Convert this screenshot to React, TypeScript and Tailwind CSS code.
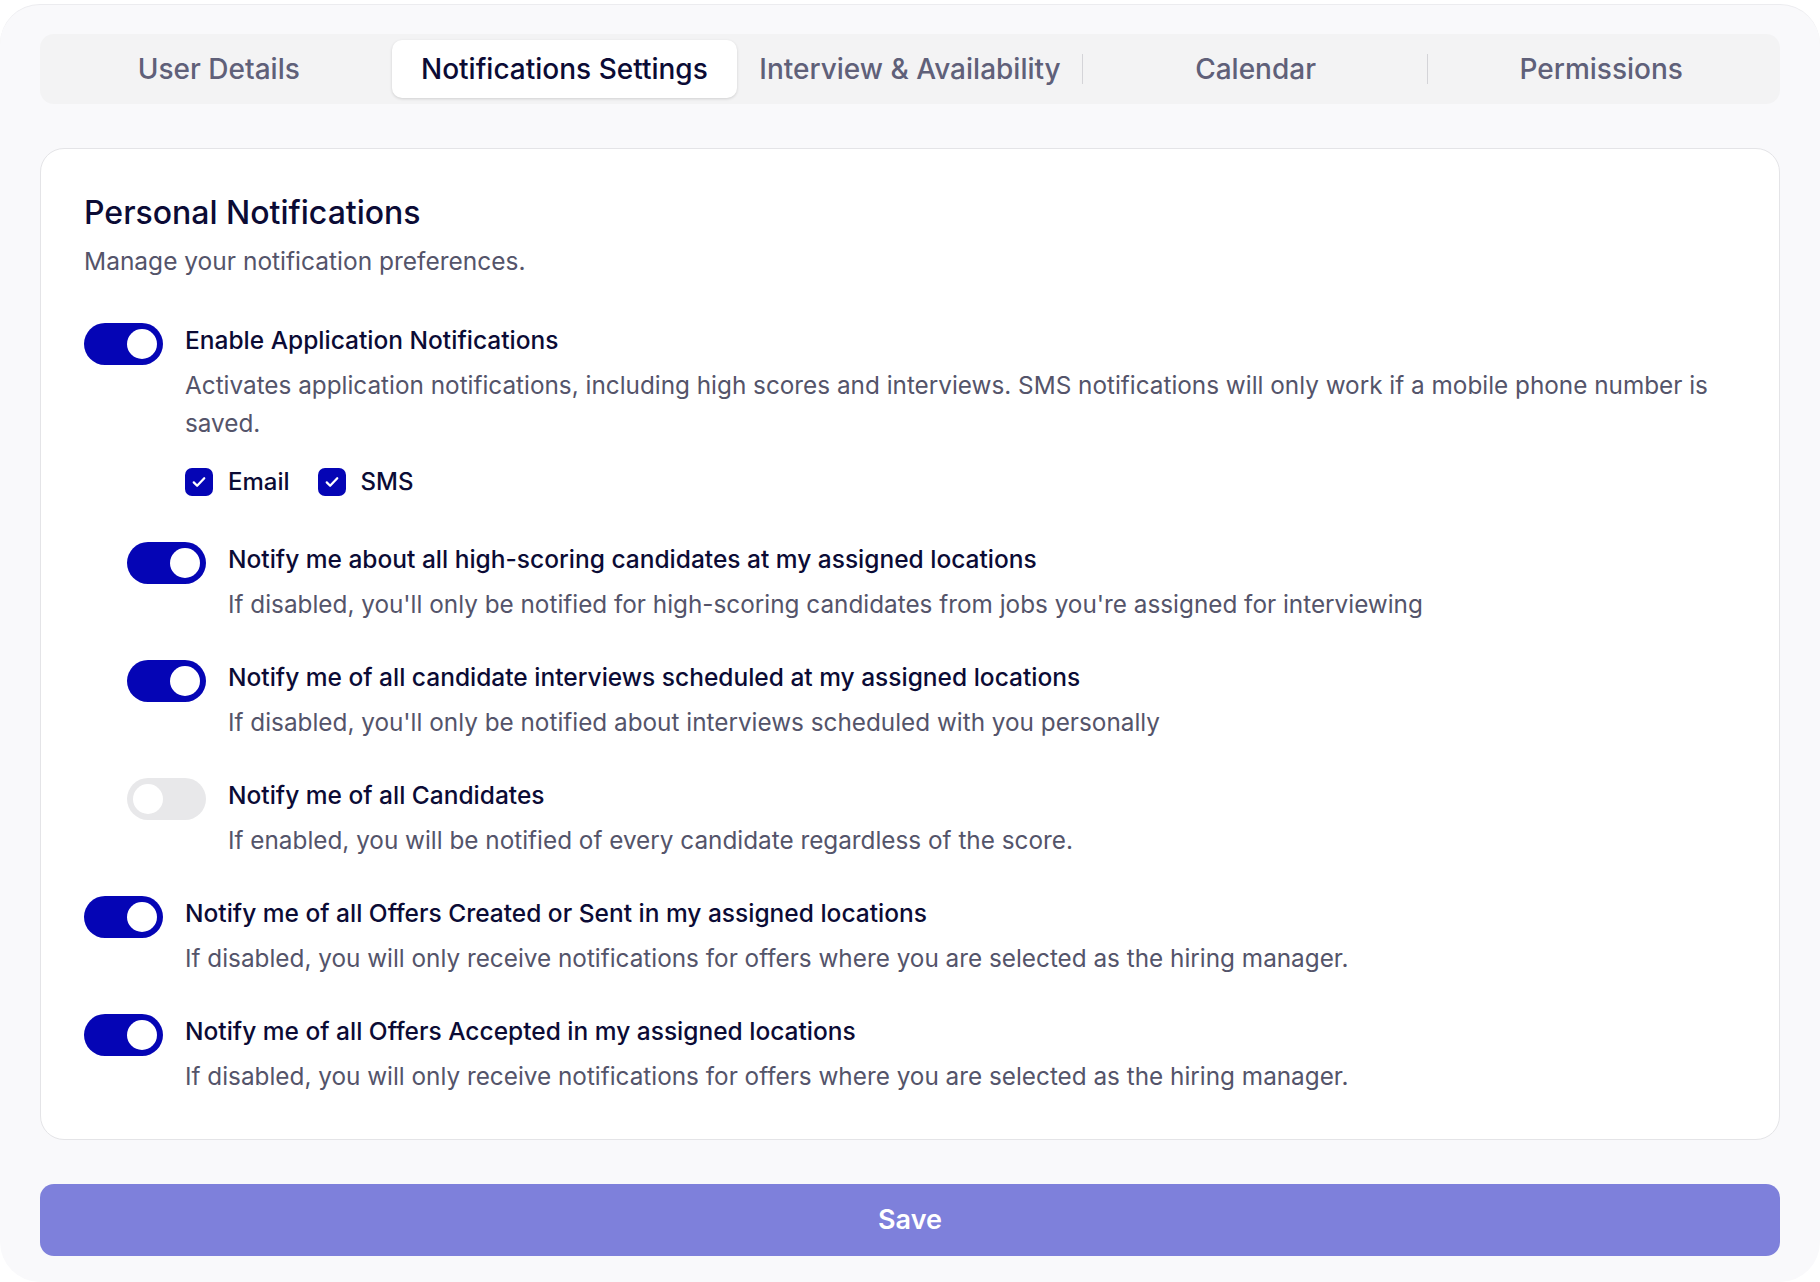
import React from "react";

const font = { fontFamily: "Inter, 'Noto Sans', sans-serif" };

function Toggle({ on }: { on: boolean }) {
  return (
    <div
      className={`relative shrink-0 w-[79px] h-[42px] rounded-full ${on ? "bg-[#0505b5]" : "bg-[#e8e8ea]"}`}
    >
      <div
        className={`absolute top-[6px] w-[30px] h-[30px] rounded-full bg-white ${on ? "right-[6px]" : "left-[6px]"}`}
      />
    </div>
  );
}

function Check({ label }: { label: string }) {
  return (
    <div className="flex items-center gap-[15px]">
      <div className="w-[28px] h-[28px] rounded-[7px] bg-[#0505b5] flex items-center justify-center">
        <svg width="18" height="18" viewBox="0 0 24 24" fill="none" stroke="white" strokeWidth="3" strokeLinecap="round" strokeLinejoin="round">
          <path d="M5 12.5l4.5 4.5L19 7" />
        </svg>
      </div>
      <span className="text-[24px] font-medium text-[#0b0b35]">{label}</span>
    </div>
  );
}

function Row({ on, label, desc, indent, children }: { on: boolean; label: string; desc: string; indent?: boolean; children?: React.ReactNode }) {
  return (
    <div className={`flex gap-[22px] ${indent ? "pl-[43px]" : ""}`}>
      <Toggle on={on} />
      <div className="flex flex-col">
        <div className="text-[24.5px] leading-[34px] font-medium text-[#0b0b35]">{label}</div>
        <div className="mt-[9px] text-[24.3px] leading-[38px] text-[#54546a]">{desc}</div>
        {children}
      </div>
    </div>
  );
}

export default function App() {
  const tabs = ["User Details", "Notifications Settings", "Interview & Availability", "Calendar", "Permissions"];
  return (
    <div className="bg-white min-h-screen" style={font}>
      <div className="mt-[4px] min-h-[1278px] rounded-[40px] bg-[#f9f9fb] border-t border-[#ececef] px-[40px] pt-[29px] pb-[21px]">
        <div className="grid grid-cols-5 h-[70px] rounded-[14px] bg-[#f3f3f4] p-[6px]">
          {tabs.map((t, i) => (
            <div key={t} className="relative flex items-center justify-center">
              {i === 1 ? (
                <div className="w-full h-full rounded-[10px] bg-white shadow-[0_1px_3px_rgba(0,0,0,0.15)] flex items-center justify-center text-[28px] font-medium text-[#0b0b35]">
                  {t}
                </div>
              ) : (
                <span className="text-[28px] font-medium text-[#5f6079]">{t}</span>
              )}
              {(i === 2 || i === 3) && (
                <div className="absolute right-0 top-1/2 -translate-y-1/2 w-px h-[30px] bg-[#d4d4d8]" />
              )}
            </div>
          ))}
        </div>

        <div className="mt-[44px] rounded-[24px] bg-white border border-[#e4e4e7] pl-[43px] pr-[43px] pt-[44px] pb-[44px]">
          <h1 className="text-[32px] leading-[40px] font-medium text-[#0b0b35]">Personal Notifications</h1>
          <p className="mt-[12px] text-[24.5px] leading-[32px] text-[#54546a]">Manage your notification preferences.</p>

          <div className="mt-[46px] flex flex-col">
            <Row
              on
              label="Enable Application Notifications"
              desc="Activates application notifications, including high scores and interviews. SMS notifications will only work if a mobile phone number is saved."
            >
              <div className="mt-[22px] flex gap-[28px]">
                <Check label="Email" />
                <Check label="SMS" />
              </div>
            </Row>
            <div className="mt-[42px] flex flex-col gap-[37px]">
              <Row
                indent
                on
                label="Notify me about all high-scoring candidates at my assigned locations"
                desc="If disabled, you'll only be notified for high-scoring candidates from jobs you're assigned for interviewing"
              />
              <Row
                indent
                on
                label="Notify me of all candidate interviews scheduled at my assigned locations"
                desc="If disabled, you'll only be notified about interviews scheduled with you personally"
              />
              <Row
                indent
                on={false}
                label="Notify me of all Candidates"
                desc="If enabled, you will be notified of every candidate regardless of the score."
              />
              <Row
                on
                label="Notify me of all Offers Created or Sent in my assigned locations"
                desc="If disabled, you will only receive notifications for offers where you are selected as the hiring manager."
              />
              <Row
                on
                label="Notify me of all Offers Accepted in my assigned locations"
                desc="If disabled, you will only receive notifications for offers where you are selected as the hiring manager."
              />
            </div>
          </div>
        </div>

        <button className="mt-[44px] w-full h-[72px] rounded-[14px] bg-[#7e80db] text-white text-[27px] font-semibold">
          Save
        </button>
      </div>
    </div>
  );
}
